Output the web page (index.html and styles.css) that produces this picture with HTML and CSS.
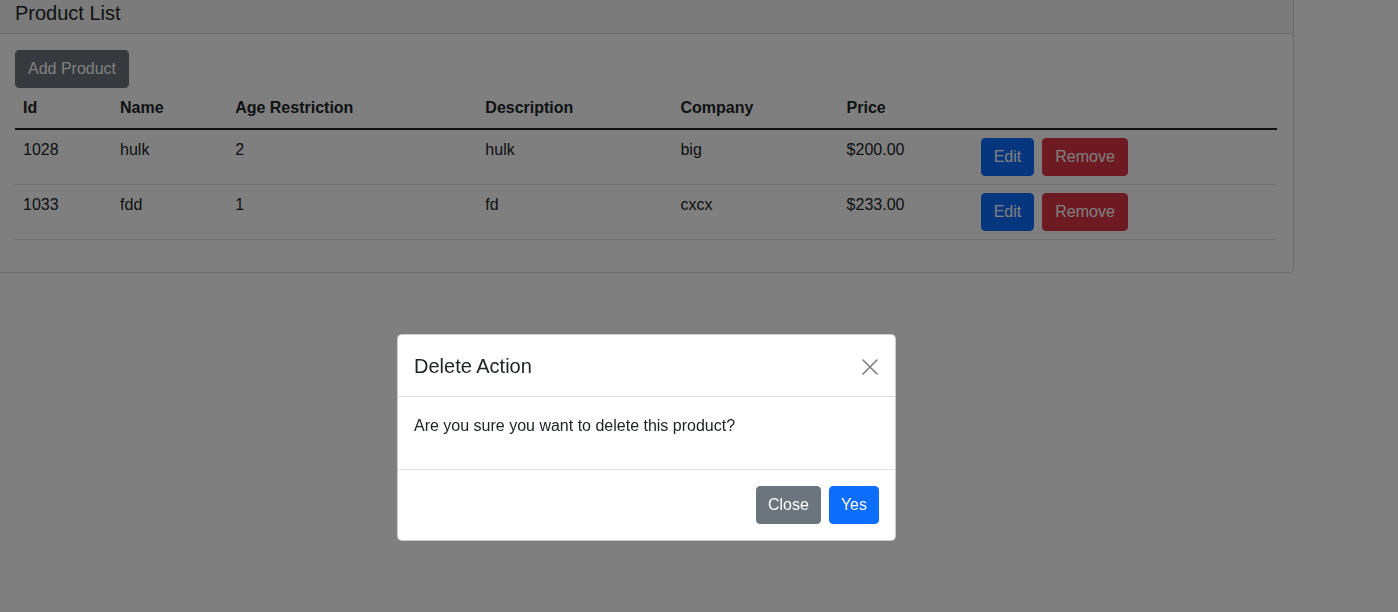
FILE: index.html
```html
<!DOCTYPE html>
<html lang="en">
<head>
<meta charset="utf-8">
<title>Product List</title>
<link rel="stylesheet" href="styles.css">
</head>
<body>
<div class="card">
  <div class="card-header">
    <h5 class="card-title">Product List</h5>
  </div>
  <div class="card-body">
    <button class="btn btn-secondary">Add Product</button>
    <table class="table">
      <thead>
        <tr>
          <th class="c-id">Id</th>
          <th class="c-name">Name</th>
          <th class="c-age">Age Restriction</th>
          <th class="c-desc">Description</th>
          <th class="c-company">Company</th>
          <th class="c-price">Price</th>
          <th class="c-actions"></th>
        </tr>
      </thead>
      <tbody>
        <tr>
          <td>1028</td>
          <td>hulk</td>
          <td>2</td>
          <td>hulk</td>
          <td>big</td>
          <td>$200.00</td>
          <td><div class="actions"><button class="btn btn-primary">Edit</button><button class="btn btn-danger">Remove</button></div></td>
        </tr>
        <tr>
          <td>1033</td>
          <td>fdd</td>
          <td>1</td>
          <td>fd</td>
          <td>cxcx</td>
          <td>$233.00</td>
          <td><div class="actions"><button class="btn btn-primary">Edit</button><button class="btn btn-danger">Remove</button></div></td>
        </tr>
      </tbody>
    </table>
  </div>
</div>

<div class="backdrop"></div>

<div class="modal">
  <div class="modal-header">
    <h5 class="modal-title">Delete Action</h5>
    <button class="btn-close" aria-label="Close">
      <svg viewBox="0 0 16 16" width="16" height="16"><path d="M1 1 L15 15 M15 1 L1 15" stroke="#000" stroke-width="1.6" stroke-linecap="round" fill="none"/></svg>
    </button>
  </div>
  <div class="modal-body">
    <p>Are you sure you want to delete this product?</p>
  </div>
  <div class="modal-footer">
    <button class="btn btn-secondary">Close</button>
    <button class="btn btn-primary">Yes</button>
  </div>
</div>
</body>
</html>
```

FILE: styles.css
```css
* { box-sizing: border-box; }

html, body {
  margin: 0;
  padding: 0;
  background: #fff;
  color: #212529;
  font-family: "Liberation Sans", Arial, sans-serif;
  font-size: 16px;
  line-height: 1.5;
  overflow: hidden;
}

.card {
  width: 1296px;
  margin: -8px 0 0 -2px;
  border: 1px solid rgba(0, 0, 0, 0.125);
  border-radius: 4px;
  background: #fff;
}

.card-header {
  padding: 8px 16px;
  background: rgba(0, 0, 0, 0.03);
  border-bottom: 1px solid rgba(0, 0, 0, 0.125);
}

.card-title {
  margin: 0;
  font-size: 20px;
  font-weight: 500;
  line-height: 1.2;
}

.card-body {
  padding: 16px;
}

.btn {
  display: inline-block;
  font-family: inherit;
  font-size: 16px;
  line-height: 24px;
  padding: 6px 12px;
  border: 1px solid transparent;
  border-radius: 4px;
  color: #fff;
  cursor: pointer;
  vertical-align: top;
}

.btn-secondary { background: #6c757d; border-color: #6c757d; }
.btn-primary { background: #0d6efd; border-color: #0d6efd; }
.btn-danger { background: #dc3545; border-color: #dc3545; }

.table {
  width: 100%;
  table-layout: fixed;
  border-collapse: collapse;
  margin-bottom: 16px;
  color: #212529;
}

.table th,
.table td {
  padding: 8px;
  text-align: left;
  vertical-align: top;
  border-bottom: 1px solid #dee2e6;
  line-height: 24px;
}

.table th { font-weight: bold; }

.table tbody { border-top: 2px solid #212529; }

.c-id { width: 97px; }
.c-name { width: 115px; }
.c-age { width: 250px; }
.c-desc { width: 195px; }
.c-company { width: 166px; }
.c-price { width: 134px; }
.c-actions { width: 304px; }

.actions {
  display: flex;
  gap: 8px;
}

.backdrop {
  position: fixed;
  inset: 0;
  background: rgba(0, 0, 0, 0.5);
}

.modal {
  position: fixed;
  top: 334px;
  left: 397px;
  width: 499px;
  background: #fff;
  border: 1px solid rgba(0, 0, 0, 0.2);
  border-radius: 5px;
  color: #212529;
}

.modal-header {
  display: flex;
  align-items: center;
  padding: 17px 16px 15px 16px;
  border-bottom: 1px solid #dee2e6;
}

.modal-title {
  margin: 0;
  font-size: 20px;
  font-weight: 500;
  line-height: 29px;
}

.btn-close {
  margin: -8px -3px -8px auto;
  width: 24px;
  height: 24px;
  padding: 4px;
  border: 0;
  background: transparent;
  opacity: 0.5;
  display: flex;
  cursor: pointer;
}

.modal-body {
  padding: 17px 16px 15px 16px;
}

.modal-body p {
  margin: 0 0 16px 0;
}

.modal-footer {
  display: flex;
  justify-content: flex-end;
  align-items: center;
  padding: 12px;
  border-top: 1px solid #dee2e6;
}

.modal-footer .btn {
  margin: 4px;
  padding: 6px 11px;
}
```
